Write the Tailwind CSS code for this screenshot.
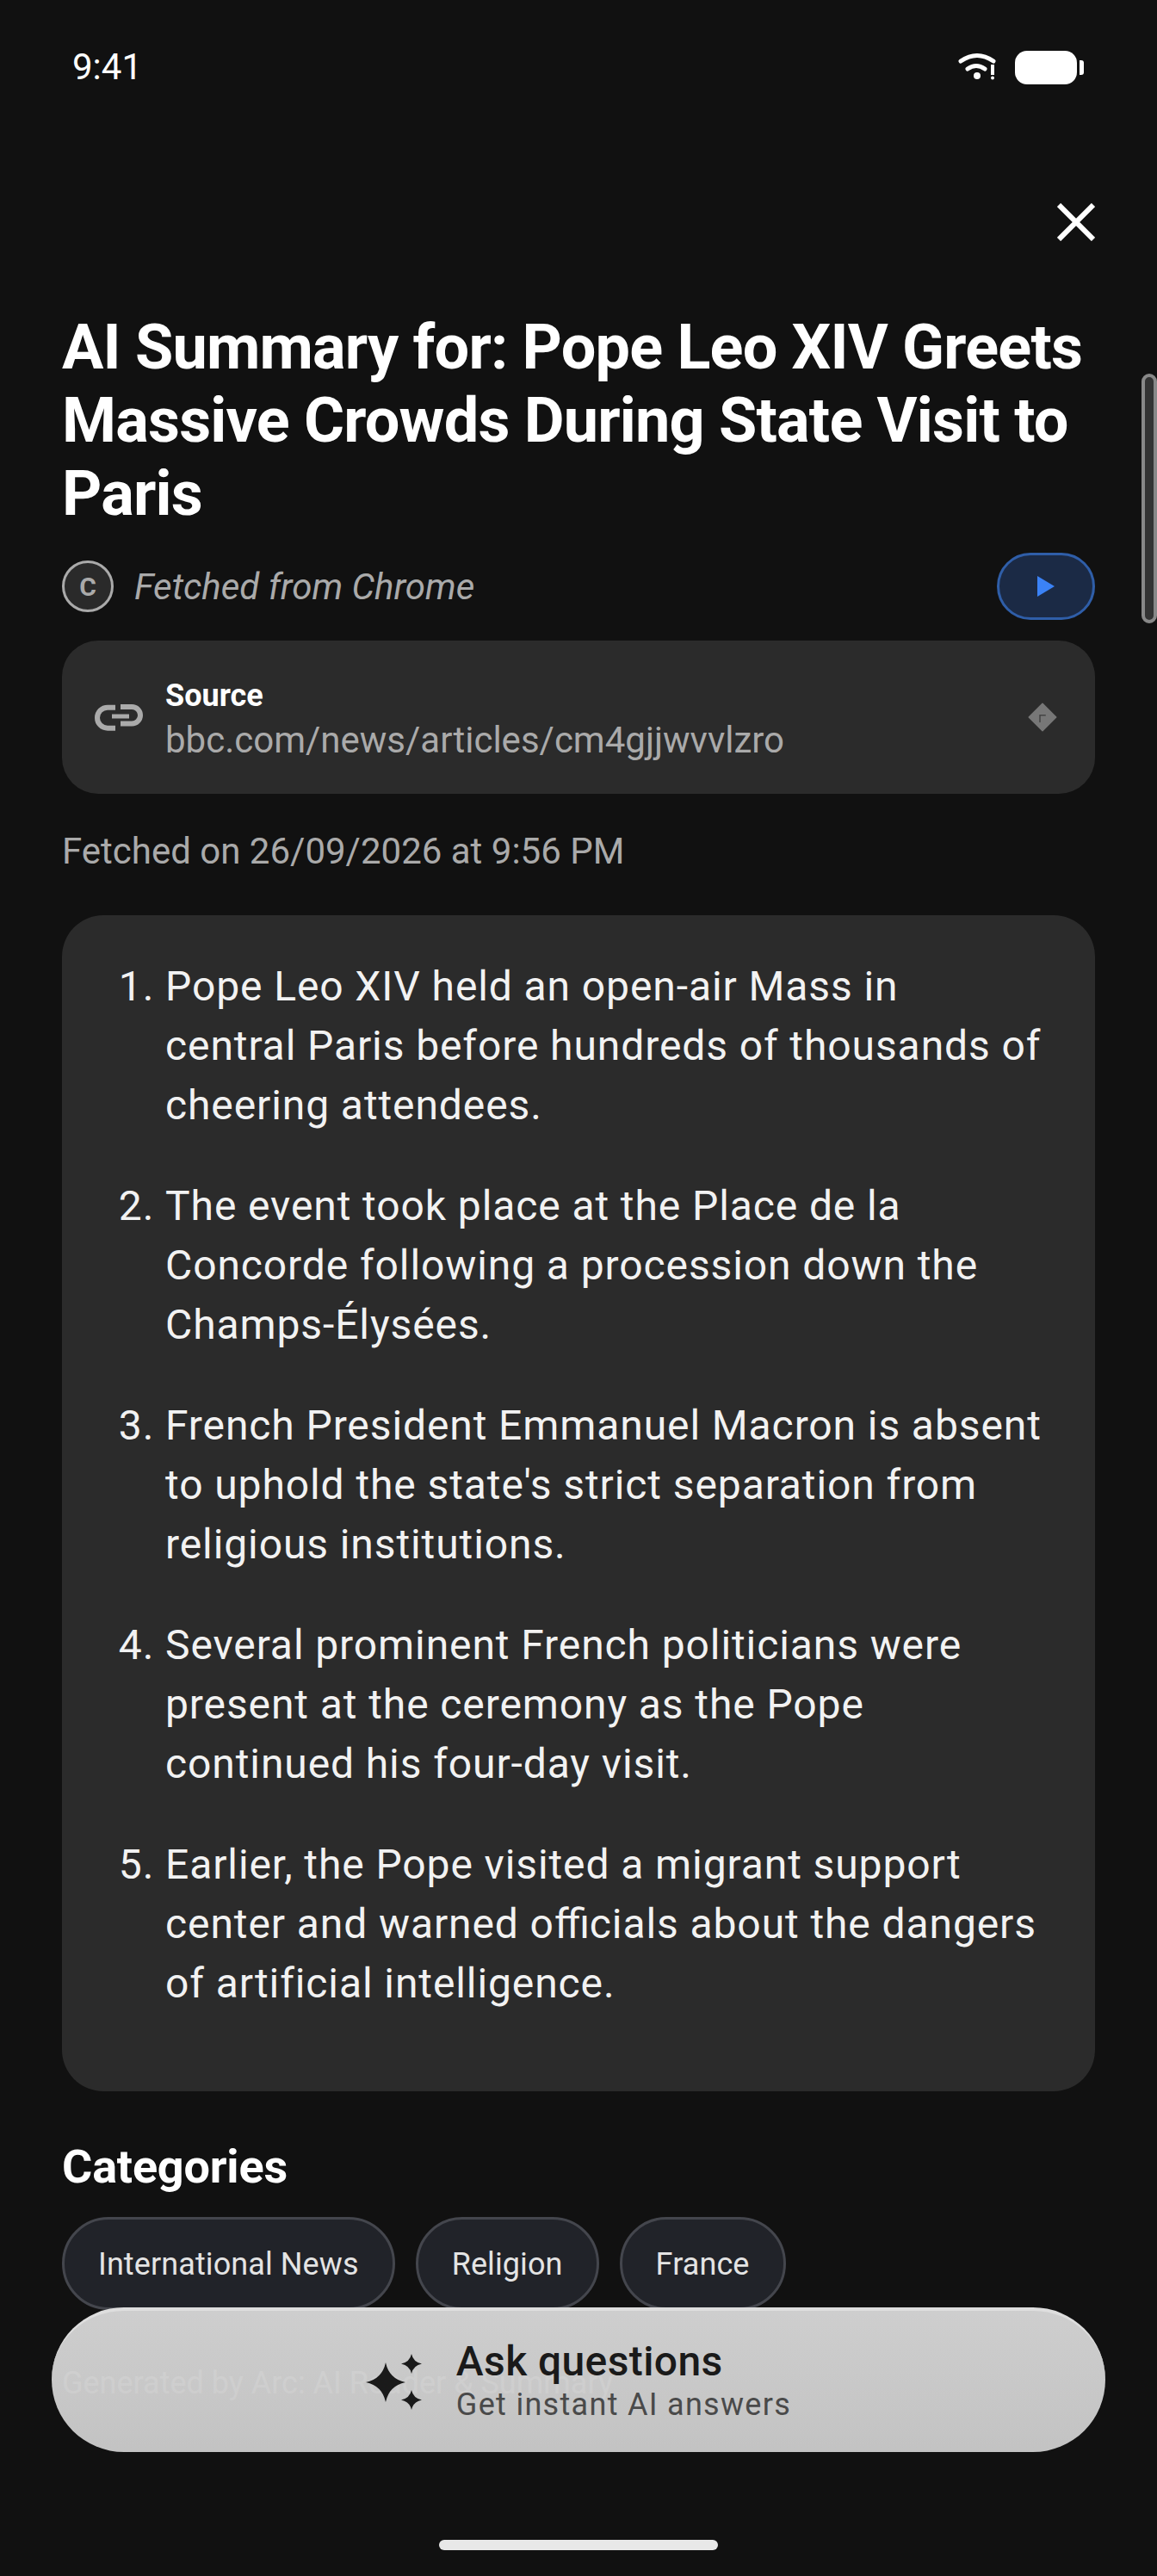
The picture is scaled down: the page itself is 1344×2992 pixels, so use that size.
<!doctype html>
<html>
<head>
<meta charset="utf-8">
<script src="https://cdn.jsdelivr.net/npm/@tailwindcss/browser@4"></script>
</head>
<body class="bg-[#111111]">
<div class="relative w-[1344px] h-[2992px] overflow-hidden bg-[#111111] text-white font-['Roboto',sans-serif]">

  <!-- status bar -->
  <div class="flex items-center justify-between h-[156px] pl-[84px] pr-[85px]">
    <span class="text-[42px] leading-none">9:41</span>
    <div class="flex items-center">
      <svg width="44" height="36" viewBox="0 0 44 36" fill="none">
        <path d="M3 11Q22 -2 41 11" stroke="#fff" stroke-width="5" stroke-linecap="round"/>
        <path d="M11 20Q21 13 31 20" stroke="#fff" stroke-width="5" stroke-linecap="round"/>
        <circle cx="22" cy="28" r="4" fill="#fff"/>
        <path d="M40 15V27" stroke="#fff" stroke-width="4"/>
        <circle cx="40" cy="30.500" r="2" fill="#fff"/>
      </svg>
      <div class="w-[72px] h-[39px] ml-[22px] rounded-[14px] bg-white"></div>
      <div class="w-[5px] h-[17px] ml-[3px] rounded-r-[3px] bg-white"></div>
    </div>
  </div>

  <main class="px-[72px]">
    <div class="flex justify-end h-[44px] mt-[80px]">
      <svg width="44" height="44" viewBox="0 0 44 44" fill="none">
        <path d="M2 2L42 42M42 2L2 42" stroke="#fff" stroke-width="6"/>
      </svg>
    </div>

    <h1 class="mt-[81px] text-[72px] leading-[85px] font-bold tracking-[-0.8px]">AI Summary for: Pope Leo XIV Greets Massive Crowds During State Visit to Paris</h1>

    <div class="flex items-center justify-between mt-[26px] h-[78px]">
      <div class="flex items-center gap-[24px]">
        <div class="flex items-center justify-center w-[60px] h-[60px] rounded-full border-[3px] border-[#aaaaaa] bg-[#2a2a2a] text-[30px] font-bold text-[#aaaaaa]">C</div>
        <span class="text-[42px] italic text-[#aaaaaa]">Fetched from Chrome</span>
      </div>
      <button class="flex items-center justify-center w-[114px] h-[78px] rounded-full border-[3px] border-[#2f5ea8] bg-[#1b2a45]">
        <svg width="20" height="24" viewBox="0 0 20 24"><path d="M0 0L20 12L0 24Z" fill="#3b82f6"/></svg>
      </button>
    </div>

    <div class="flex items-center mt-[24px] h-[178px] rounded-[42px] bg-[#2b2b2b] pl-[38px] pr-[43px]">
      <svg width="56" height="33" viewBox="0 0 56 33" fill="none" stroke="#aaaaaa" stroke-width="6">
        <path d="M24 4.700H15A12 12 0 0 0 15 28.700H24"/>
        <path d="M30 4H43.250A9.750 9.750 0 0 1 43.250 23.500H30"/>
        <path d="M20 15H40" stroke-width="5"/>
      </svg>
      <div class="flex-1 ml-[26px] pt-[8px]">
        <div class="text-[36px] leading-[46px] font-bold">Source</div>
        <div class="text-[42px] leading-[58px] text-[#aaaaaa]">bbc.com/news/articles/cm4gjjwvvlzro</div>
      </div>
      <svg width="36" height="36" viewBox="0 0 24 24"><path d="M12 1.500L22.500 12L12 22.500L1.500 12Z" fill="#777777" stroke="#777777" stroke-linejoin="round"/><path d="M10 16V10.500H14.500" stroke="#444444" stroke-width="1" fill="none"/></svg>
    </div>

    <p class="mt-[42px] text-[42px] leading-[50px] text-[#aaaaaa]">Fetched on 26/09/2026 at 9:56 PM</p>

    <section class="mt-[49px] rounded-[48px] bg-[#2b2b2b] pt-[48px] pb-[91px] pl-[120px] pr-[48px]">
      <ol class="list-decimal text-[48px] leading-[69px] tracking-[0.9px] text-[#f2f2f2] flex flex-col gap-[48px]">
        <li>Pope Leo XIV held an open-air Mass in<br>central Paris before hundreds of thousands of cheering attendees.</li>
        <li>The event took place at the Place de la Concorde following a procession down the Champs-Élysées.</li>
        <li>French President Emmanuel Macron is absent to uphold the state's strict separation from religious institutions.</li>
        <li>Several prominent French politicians were present at the ceremony as the Pope continued his four-day visit.</li>
        <li>Earlier, the Pope visited a migrant support center and warned o<span class="tracking-normal">ffi</span>cials about the dangers of artificial intelligence.</li>
      </ol>
    </section>

    <h2 class="mt-[56px] text-[54px] leading-[64px] font-bold tracking-[-0.2px]">Categories</h2>
    <div class="flex gap-[24px] mt-[26px]">
      <span class="flex items-center h-[108px] pt-[2px] px-[39px] rounded-full border-[3px] border-[#44464d] bg-[#212329] text-[36px] tracking-[0.1px] text-[#e4e4e4]">International News</span>
      <span class="flex items-center h-[108px] pt-[2px] px-[39px] rounded-full border-[3px] border-[#44464d] bg-[#212329] text-[36px] tracking-[0.1px] text-[#e4e4e4]">Religion</span>
      <span class="flex items-center h-[108px] pt-[2px] px-[39px] rounded-full border-[3px] border-[#44464d] bg-[#212329] text-[36px] tracking-[0.1px] text-[#e4e4e4]">France</span>
    </div>
    <p class="mt-[63px] text-[36px] leading-[44px] text-[#aaaaaa]">Generated by Arc: AI Reader &amp; Summary</p>
  </main>

  <!-- floating ask button -->
  <button class="absolute left-[60px] top-[2680px] flex items-center justify-center gap-[40px] w-[1224px] h-[168px] rounded-full border-t-[4px] border-[#dedede] bg-gradient-to-b from-[#d6d6d6]/96 to-[#cacaca]/96">
    <svg width="65" height="65" viewBox="0 0 65 65" fill="#1a1a1a">
      <path d="M23 10Q27 29 46 33Q27 37 23 56Q19 37 0 33Q19 29 23 10Z"/>
      <path d="M53 0Q55 9.500 65 11.500Q55 13.500 53 23Q51 13.500 41 11.500Q51 9.500 53 0Z"/>
      <path d="M53 42Q55 51.500 65 53.500Q55 55.500 53 65Q51 55.500 41 53.500Q51 51.500 53 42Z"/>
    </svg>
    <div class="text-left">
      <div class="text-[48px] leading-[54px] font-medium tracking-[0.4px] text-[#1a1a1a]">Ask questions</div>
      <div class="text-[36px] leading-[46px] tracking-[1.3px] text-[#4a4a4a]">Get instant AI answers</div>
    </div>
  </button>

  <!-- scroll thumb -->
  <div class="absolute left-[1326px] top-[434px] w-[18px] h-[290px] rounded-full border-[4px] border-[#888888] bg-[#333333]"></div>

  <!-- home indicator -->
  <div class="absolute left-[510px] top-[2950px] w-[324px] h-[12px] rounded-full bg-[#e8e8e8]"></div>
</div>
</body>
</html>
